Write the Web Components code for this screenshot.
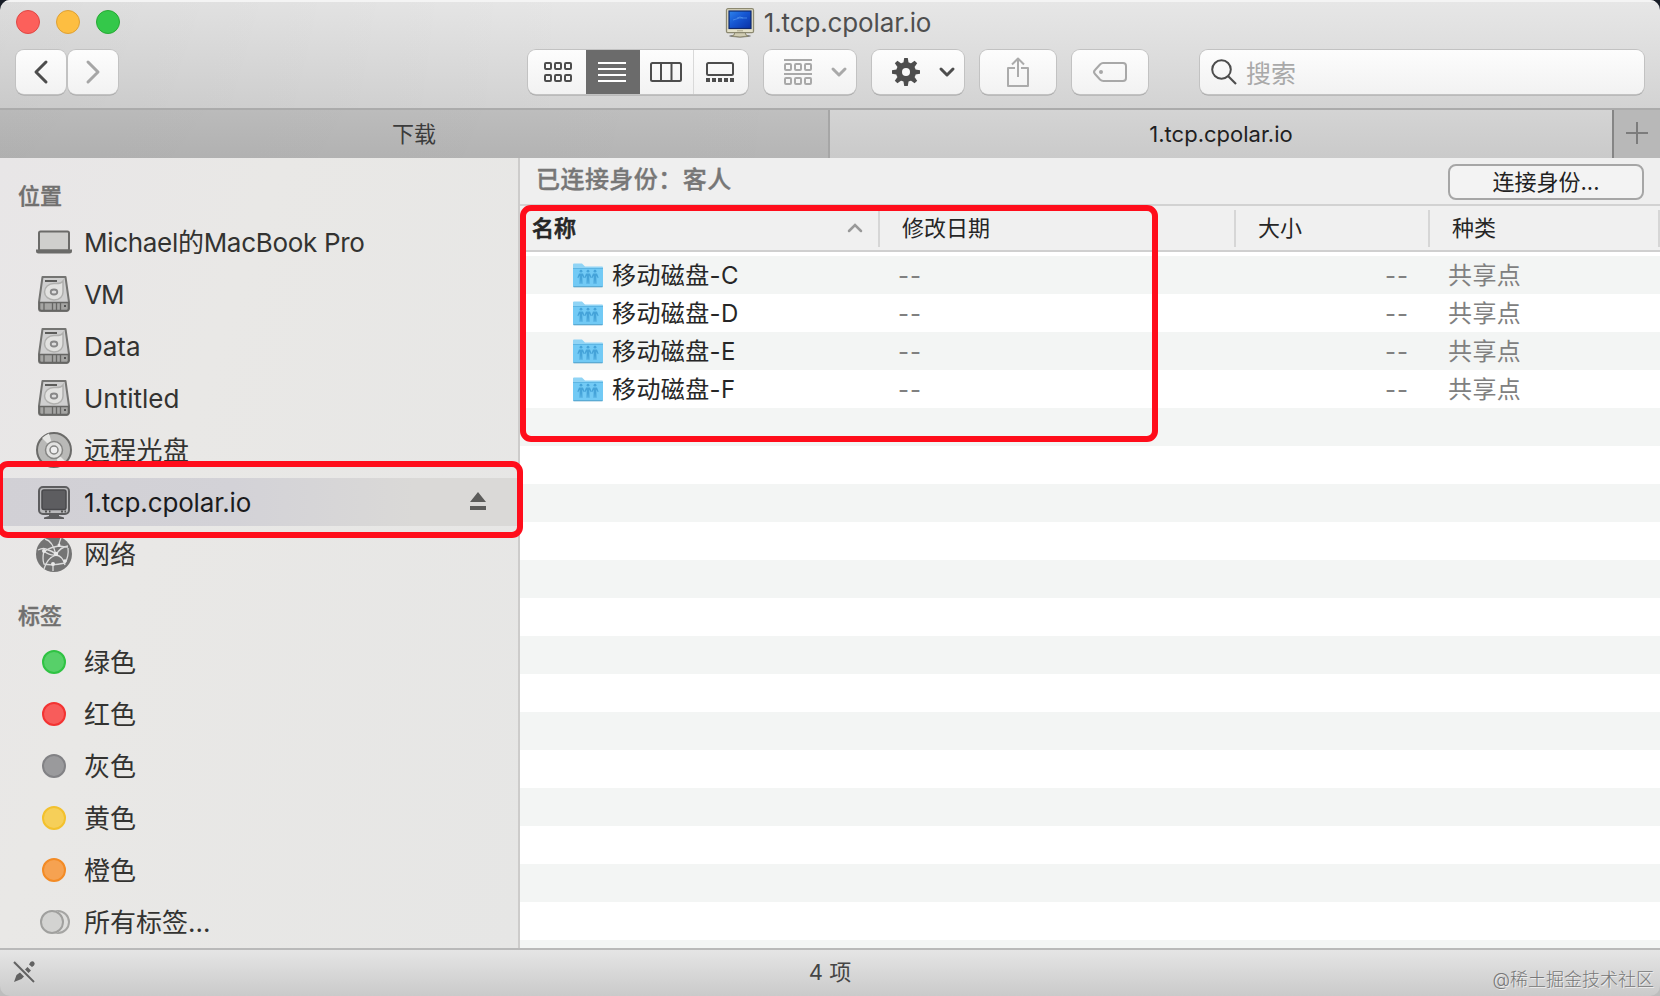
<!DOCTYPE html>
<html lang="zh-CN">
<head>
<meta charset="utf-8">
<title>1.tcp.cpolar.io</title>
<style>
    html, body {
        margin: 0;
        height: 100%;
        overflow: hidden;
        background: linear-gradient(#171c26 50%, #bdbdbd 50%);
        font-family: Inter, "Noto Sans CJK SC", sans-serif;
    }
</style>
</head>
<body>
<finder-window></finder-window>
<script>
const DISK = `
    <path d="M4.5 1h23l3.5 25v6.500a2.500 2.500 0 0 1-2.500 2.500h-25a2.500 2.500 0 0 1-2.500-2.500V26z" fill="#cfcfcf" stroke="#747472" stroke-width="2" stroke-linejoin="round"/>
    <path d="M1.500 26.500h29v6a2 2 0 0 1-2 2h-25a2 2 0 0 1-2-2z" fill="#a5a5a3" stroke="#666664" stroke-width="1.600"/>
    <path d="M7 5h12" stroke="#5c5c5a" stroke-width="2"/>
    <path d="M25 5c-2 3-5 2.500-9 2.500C10.500 7.500 6.500 11.500 6.500 16s4.500 8 9.500 8c6 0 9-4 9-8z" fill="#e2e2e0" stroke="#b0b0ae" stroke-width="1.500"/>
    <ellipse cx="16" cy="16" rx="3.300" ry="2.500" fill="#ddd" stroke="#888" stroke-width="1.800"/>
    <path d="M6 27v7M14.500 27v7M18.500 27v7M22.500 27v7" stroke="#666664" stroke-width="1.300"/>
    <path d="M26 30h2" stroke="#555" stroke-width="2"/>`;

const ICONS = {
    back: [14, 24, '<path d="M12 2L2 12l10 10" fill="none" stroke="#4d4d4d" stroke-width="3" stroke-linecap="round" stroke-linejoin="round"/>'],
    forward: [14, 24, '<path d="M2 2l10 10L2 22" fill="none" stroke="#a6a6a6" stroke-width="3" stroke-linecap="round" stroke-linejoin="round"/>'],
    grid: [28, 20, '<g fill="none" stroke="#4d4d4d" stroke-width="2"><rect x="1" y="1" width="6" height="6" rx="1"/><rect x="11" y="1" width="6" height="6" rx="1"/><rect x="21" y="1" width="6" height="6" rx="1"/><rect x="1" y="13" width="6" height="6" rx="1"/><rect x="11" y="13" width="6" height="6" rx="1"/><rect x="21" y="13" width="6" height="6" rx="1"/></g>'],
    list: [28, 20, '<path d="M0 1h28M0 7h28M0 13h28M0 19h28" stroke="#fff" stroke-width="2"/>'],
    columns: [32, 20, '<g fill="none" stroke="#4d4d4d" stroke-width="2"><rect x="1" y="1" width="30" height="18" rx="1.500"/><path d="M11 1v18M21.500 1v18"/></g>'],
    gallery: [28, 20, '<rect x="1" y="1" width="26" height="12" rx="1.500" fill="none" stroke="#4d4d4d" stroke-width="2"/><path d="M0 18h28" stroke="#4d4d4d" stroke-width="4" stroke-dasharray="4 2"/>'],
    group: [28, 26, '<g fill="none" stroke="#a9a9a9" stroke-width="2"><path d="M0 1h28M0 15h28"/><rect x="1" y="5" width="6" height="6" rx="1"/><rect x="11" y="5" width="6" height="6" rx="1"/><rect x="21" y="5" width="6" height="6" rx="1"/><rect x="1" y="19" width="6" height="6" rx="1"/><rect x="11" y="19" width="6" height="6" rx="1"/><rect x="21" y="19" width="6" height="6" rx="1"/></g>'],
    chevron: [16, 10, '<path d="M2 2l6 6 6-6" fill="none" stroke="currentColor" stroke-width="3" stroke-linecap="round" stroke-linejoin="round"/>'],
    gear: [28, 28, `<g fill="#4d4d4d">${[0, 45, 90, 135].map(a => `<path transform="rotate(${a} 14 14)" d="M12.200 0h3.600l1 6v16l-1 6h-3.600l-1-6V6z"/>`).join('')}<circle cx="14" cy="14" r="10"/></g><circle cx="14" cy="14" r="4" fill="#f8f8f8"/>`],
    share: [24, 30, '<path d="M9 11H2v18h20V11h-7M12 20V2M6 7.500L12 1.500l6 6" fill="none" stroke="#ababab" stroke-width="2" stroke-linejoin="round"/>'],
    tag: [34, 20, '<path d="M10 1h20a3 3 0 0 1 3 3v12a3 3 0 0 1-3 3H10.500q-2 0-3.500-1.500L2 12q-2-2 0-4l5-5.500Q8.500 1 10 1z" fill="none" stroke="#a8a8a8" stroke-width="2"/><circle cx="8" cy="10" r="2" fill="#a8a8a8"/>'],
    search: [26, 26, '<circle cx="10.500" cy="10.500" r="9.300" fill="none" stroke="#4d4d4d" stroke-width="2"/><path d="M17 17l8 8" stroke="#4d4d4d" stroke-width="2.200"/>'],
    plus: [22, 22, '<path d="M11 0v22M0 11h22" stroke="#7c7c7c" stroke-width="2"/>'],
    sort: [16, 10, '<path d="M2 8l6-6 6 6" fill="none" stroke="#999" stroke-width="2.500" stroke-linecap="round"/>'],
    eject: [16, 18, '<path d="M8 0l8 10H0zM0 14h16v4H0z" fill="#5c5c5a"/>'],
    laptop: [36, 24, '<rect x="3" y="1.500" width="30" height="19" rx="1.500" fill="#cfcfcd" stroke="#6b6b69" stroke-width="2"/><path d="M0 19.500h36v1.500a2.500 2.500 0 0 1-2.500 2.500h-31A2.500 2.500 0 0 1 0 21z" fill="#6b6b69"/>'],
    disk: [32, 36, DISK],
    disc: [36, 36, '<circle cx="18" cy="18" r="17" fill="#b9b9b7" stroke="#6b6b69" stroke-width="2"/><path d="M18 18L6 6q3-3 7-4.500zM18 18l12 12q-3 3-7 4.500z" fill="#e6e6e4"/><circle cx="18" cy="18" r="8.500" fill="#e2e2e0" stroke="#858583" stroke-width="1.500"/><circle cx="18" cy="18" r="4" fill="#eee" stroke="#858583" stroke-width="1.500"/>'],
    monitor: [32, 33, '<rect x="1" y="1" width="30" height="27" rx="4" fill="#b9b9bb" stroke="#5d5d5f" stroke-width="2"/><rect x="4" y="4" width="24" height="19.500" rx="2" fill="#5d5d60" stroke="#49494c" stroke-width="1.500"/><path d="M7 25.500h2M11 25.500h1.500M23 25.500h2M26.500 25.500H28" stroke="#555" stroke-width="2"/><path d="M11 28h10v2l5 1.500V33H6v-1.500l5-1.500z" fill="#5d5d5f"/>'],
    network: [36, 36, '<circle cx="18" cy="18" r="18" fill="#747474"/><g fill="none" stroke="#dcdcdc" stroke-width="1.300"><path d="M2 14q6-3 10 0 5 1 8 5 7 1 9 10M9 3q8 2 11 16M20 19Q11 22 8 33M20 19q4-8 12-9M25 2q-2 4-2 8-8 1-14 5M8 15q-2 8 0 13 9 2 21-1 4-7 3-15M20 19q-6 1-12-4M23 10q5 1 9 1M17 27v8"/></g><g fill="#e8e8e8"><circle cx="8" cy="15" r="2"/><circle cx="20" cy="18" r="2.200"/><circle cx="23" cy="9" r="1.500"/><circle cx="17" cy="28" r="2"/><circle cx="29" cy="25" r="1.800"/></g>'],
    alltags: [28, 24, '<circle cx="18" cy="12" r="11" fill="#dededc" stroke="#a5a5a3" stroke-width="2"/><circle cx="12" cy="12" r="12" fill="#e8e8e6"/><circle cx="12" cy="12" r="11" fill="#d3d3d1" stroke="#a0a09e" stroke-width="2"/>'],
    folder: [30, 25, `<path d="M0 1.500Q0 .5 1 .5h8l3 3h17q1 0 1 1V23q0 1-1 1H1q-1 0-1-1z" fill="#90d4f5"/><path d="M0 6h30v17q0 1-1 1H1q-1 0-1-1z" fill="#72caf5"/><path d="M0 5.500h30" stroke="#5db6e4"/><path d="M.5 23.800h29" stroke="#529fc7" stroke-width="1"/><g fill="#45a3d9">${[8, 15, 22].map(x => `<circle cx="${x}" cy="8.200" r="1.400"/><path d="M${x - 2} 10.500h4l1.600 4-.8.800-1.500-2.500.2 8h-1.100l-.4-4.500-.4 4.500h-1.100l.2-8-1.500 2.500-.8-.8z"/>`).join('')}</g>`],
    server: [30, 30, '<defs><linearGradient id="s" x1="0" y1="0" x2="1" y2="1"><stop offset="0" stop-color="#2e83ec"/><stop offset=".45" stop-color="#1657d3"/><stop offset="1" stop-color="#0930a5"/></linearGradient></defs><ellipse cx="15" cy="28" rx="11" ry="1.500" fill="#777"/><path d="M10 24h10l1 3 2 1q-8 2-16 0l2-1z" fill="#d0ccb3" stroke="#8e8a70"/><rect x="1.500" y=".7" width="27" height="24" rx="1.500" fill="#e4e1c9" stroke="#8c8971" stroke-width="1.300"/><rect x="4" y="3" width="22" height="17.500" fill="url(#s)" stroke="#10286a" stroke-width="1.200"/><path d="M8 12q6-3 14-2M12 10l3-1 3 1" fill="none" stroke="#4f8fe8" stroke-width=".8"/><path d="M12 22.800h6" stroke="#aaa68b"/>'],
    pencil: [22, 22, '<path d="M1 21l2.500-7 3.500-2.500 4 4L8.500 18zM11.500 9l3-3 3.500 3.500-3 3zM16 3.500l1.500-2.500q2-1.500 3.500 0t0 3.500L19 6z" fill="#626262"/><path d="M1 1l20 20" stroke="#d8d8d8" stroke-width="5"/><path d="M1 1l20 20" stroke="#626262" stroke-width="2"/>']
};

class BaseElement extends HTMLElement {
    constructor() {
        super();
        this.attachShadow({ mode: 'open' });
    }

    connectedCallback() {
        this.shadowRoot.innerHTML = this.template();
    }
}

class FinderIcon extends BaseElement {
    template() {
        const [width, height, body] = ICONS[this.getAttribute('name')];
        return `
            <style>
                :host { display: inline-flex; flex: none; }
                svg { display: block; overflow: visible; }
            </style>
            <svg width="${width}" height="${height}" viewBox="0 0 ${width} ${height}">${body}</svg>`;
    }
}

class ToolButton extends BaseElement {
    template() {
        return `
            <style>
                :host {
                    display: flex;
                    align-items: center;
                    justify-content: center;
                    box-sizing: border-box;
                    height: 44px;
                    border-radius: 8px;
                    background: linear-gradient(#fdfdfd, #f2f2f2);
                    box-shadow: 0 0 0 1px #c2c2c2, 0 1.5px 0 0 #a0a0a0;
                    color: #4d4d4d;
                }
            </style>
            <slot></slot>`;
    }
}

class FinderToolbar extends BaseElement {
    template() {
        return `
            <style>
                :host {
                    display: block;
                    box-sizing: border-box;
                    height: 110px;
                    border-bottom: 2px solid #ababab;
                    background: linear-gradient(90deg, rgba(0, 0, 0, .045), transparent 35%), linear-gradient(#e7e7e7, #d3d3d3);
                    box-shadow: inset 0 2px 0 #f4f4f4;
                }
                .title {
                    display: grid;
                    grid-template-columns: 1fr auto 1fr;
                    height: 50px;
                }
                .lights { display: flex; gap: 16px; padding: 10px 16px; }
                .lights i {
                    box-sizing: border-box;
                    width: 24px;
                    height: 24px;
                    border: 1px solid;
                    border-radius: 50%;
                }
                .name {
                    display: flex;
                    gap: 9px;
                    padding: 8px 4px 0 0;
                    font-size: 26px;
                    line-height: 30px;
                    letter-spacing: -.12px;
                    color: #4f4f4f;
                }
                .tools { display: flex; padding: 0 16px; }
                .nav { width: 50px; margin-right: 2px; }
                .views { width: 220px; margin-left: 408px; overflow: hidden; clip-path: inset(-1px -1px -3px round 8px); }
                .views span { display: flex; align-items: center; justify-content: center; height: 100%; box-sizing: border-box; }
                .wide { width: 92px; gap: 19px; margin-left: 16px; padding-left: 11px; box-sizing: border-box; }
                .plain { width: 76px; margin-left: 16px; }
                .search {
                    width: 444px;
                    margin-left: 52px;
                    justify-content: flex-start;
                    gap: 9px;
                    padding-left: 11px;
                    font-size: 25px;
                    color: #a9a9a9;
                }
            </style>
            <div class="title">
                <div class="lights">
                    <i style="background:#fc605b;border-color:#df4744"></i>
                    <i style="background:#fdbe41;border-color:#dea034"></i>
                    <i style="background:#34c84a;border-color:#27a934"></i>
                </div>
                <div class="name"><finder-icon name="server"></finder-icon><span>1.tcp.cpolar.io</span></div>
            </div>
            <div class="tools">
                <tool-button class="nav"><finder-icon name="back"></finder-icon></tool-button>
                <tool-button class="nav"><finder-icon name="forward"></finder-icon></tool-button>
                <tool-button class="views">
                    <span style="width:58px;padding-left:2px"><finder-icon name="grid"></finder-icon></span>
                    <span style="width:54px;padding-right:2px;background:#6b6b6b"><finder-icon name="list"></finder-icon></span>
                    <span style="width:54px;padding-right:1px;border-right:1px solid #d9d9d9"><finder-icon name="columns"></finder-icon></span>
                    <span style="width:54px;padding-right:2px"><finder-icon name="gallery"></finder-icon></span>
                </tool-button>
                <tool-button class="wide" style="color:#a9a9a9"><finder-icon name="group"></finder-icon><finder-icon name="chevron"></finder-icon></tool-button>
                <tool-button class="wide"><finder-icon name="gear"></finder-icon><finder-icon name="chevron"></finder-icon></tool-button>
                <tool-button class="plain"><finder-icon name="share"></finder-icon></tool-button>
                <tool-button class="plain"><finder-icon name="tag"></finder-icon></tool-button>
                <tool-button class="search"><finder-icon name="search"></finder-icon><span>搜索</span></tool-button>
            </div>`;
    }
}

class FinderTabs extends BaseElement {
    template() {
        return `
            <style>
                :host {
                    display: grid;
                    grid-template-columns: 828px 784px 48px;
                    box-sizing: border-box;
                    height: 48px;
                    border-bottom: 2px solid #989898;
                    font-size: 22px;
                    line-height: 48px;
                    text-align: center;
                    color: #1f1f1f;
                }
                .idle { background: linear-gradient(90deg, rgba(0, 0, 0, .03), transparent), linear-gradient(#bfbfbf, #b5b5b5); color: #3c3c3c; }
                .active { background: linear-gradient(#d4d4d4, #cacaca); border-left: 2px solid #a6a6a6; }
                .add { display: flex; align-items: center; justify-content: center; padding-bottom: 2px; border-left: 2px solid #858585; background: #b8b8b8; }
            </style>
            <div class="idle">下载</div>
            <div class="active">1.tcp.cpolar.io</div>
            <div class="add"><finder-icon name="plus"></finder-icon></div>`;
    }
}

class SidebarItem extends BaseElement {
    template() {
        const icon = this.getAttribute('icon');
        const [fill, ring] = (this.getAttribute('dot') || '').split(' ');
        return `
            <style>
                :host {
                    display: flex;
                    align-items: center;
                    box-sizing: border-box;
                    height: 52px;
                    padding: 0 32px 0 34px;
                    font-size: 26px;
                    line-height: 46px;
                    color: #333331;
                    white-space: nowrap;
                }
                :host([selected]) {
                    height: 48px;
                    margin: 2px 0;
                    background: linear-gradient(90deg, #d1d0d5, #d3d2d7 45%, #dad9d7 80%);
                    color: #1b1b1d;
                }
                .icon { display: flex; justify-content: center; width: 40px; margin-right: 10px; }
                .dot { box-sizing: border-box; width: 24px; height: 24px; border: 2px solid ${ring}; border-radius: 50%; background: ${fill}; }
                .label { flex: 1; padding-top: 2px; }
                .eject { padding-bottom: 2px; }
            </style>
            <span class="icon">${icon ? `<finder-icon name="${icon}"></finder-icon>` : '<i class="dot"></i>'}</span>
            <span class="label"><slot></slot></span>
            ${this.hasAttribute('selected') ? '<finder-icon class="eject" name="eject"></finder-icon>' : ''}`;
    }
}

class FinderSidebar extends BaseElement {
    template() {
        return `
            <style>
                :host {
                    display: block;
                    box-sizing: border-box;
                    width: 520px;
                    border-right: 2px solid #cdcccb;
                    background: linear-gradient(110deg, #e8e6e7, #e9e8e6 35%, #e6e6e5);
                }
                h2 {
                    margin: 0;
                    padding-left: 18px;
                    font-size: 22px;
                    font-weight: 500;
                    -webkit-text-stroke: .4px #71706f;
                    color: #71706f;
                }
                .places { height: 58px; line-height: 76px; }
                .tags { height: 56px; line-height: 72px; }
            </style>
            <h2 class="places">位置</h2>
            <sidebar-item icon="laptop" style="letter-spacing:-.3px">Michael的MacBook Pro</sidebar-item>
            <sidebar-item icon="disk" style="letter-spacing:-.9px">VM</sidebar-item>
            <sidebar-item icon="disk">Data</sidebar-item>
            <sidebar-item icon="disk">Untitled</sidebar-item>
            <sidebar-item icon="disc" style="letter-spacing:.3px">远程光盘</sidebar-item>
            <sidebar-item icon="monitor" selected style="letter-spacing:-.15px">1.tcp.cpolar.io</sidebar-item>
            <sidebar-item icon="network">网络</sidebar-item>
            <h2 class="tags">标签</h2>
            <sidebar-item dot="#57d069 #2fc343">绿色</sidebar-item>
            <sidebar-item dot="#f85c5b #f33332">红色</sidebar-item>
            <sidebar-item dot="#9a9a9c #828285">灰色</sidebar-item>
            <sidebar-item dot="#f6cf59 #f3c12d">黄色</sidebar-item>
            <sidebar-item dot="#f6a251 #f38b25">橙色</sidebar-item>
            <sidebar-item icon="alltags">所有标签...</sidebar-item>`;
    }
}

class FileRow extends BaseElement {
    template() {
        return `
            <style>
                :host {
                    display: grid;
                    grid-template-columns: 378px 356px 174px 1fr;
                    height: 38px;
                    font-size: 24px;
                    line-height: 40px;
                    color: #808080;
                }
                .name { display: flex; align-items: center; gap: 9px; padding-left: 53px; letter-spacing: .4px; color: #262626; }
                finder-icon { padding-bottom: 1px; }
                .kind { padding-left: 20px; letter-spacing: .4px; }
                .size { padding-right: 19px; text-align: right; }
                .size, .date { letter-spacing: 1px; }
            </style>
            <span class="name"><finder-icon name="folder"></finder-icon><span><slot></slot></span></span>
            <span class="date">--</span>
            <span class="size">--</span>
            <span class="kind">共享点</span>`;
    }
}

class FileList extends BaseElement {
    template() {
        const rows = ['C', 'D', 'E', 'F'].map(letter => `<file-row>移动磁盘-${letter}</file-row>`).join('');
        return `
            <style>
                :host { display: flex; flex-direction: column; flex: 1; min-width: 0; background: #fff; }
                .identity {
                    display: flex;
                    justify-content: space-between;
                    box-sizing: border-box;
                    height: 48px;
                    padding: 6px 16px 0 16px;
                    border-bottom: 2px solid #d2d2d2;
                    background: #efefef;
                    font-size: 24px;
                    font-weight: 500;
                    line-height: 32px;
                    letter-spacing: .45px;
                    color: #777;
                }
                .identity span { -webkit-text-stroke: .35px #777; }
                button {
                    box-sizing: border-box;
                    width: 196px;
                    height: 36px;
                    padding: 0;
                    border: 2px solid #a6a6a6;
                    border-radius: 8px;
                    background: #f3f3f3;
                    font: 22px/32px Inter, "Noto Sans CJK SC", sans-serif;
                    color: #222;
                }
                .head {
                    display: grid;
                    grid-template-columns: 360px 356px 194px 1fr;
                    align-items: center;
                    box-sizing: border-box;
                    height: 46px;
                    border-bottom: 2px solid #cfcfcf;
                    background: #f0f0f0;
                    font-size: 22px;
                    line-height: 36px;
                    color: #262626;
                }
                .head span {
                    display: flex;
                    align-items: center;
                    justify-content: space-between;
                    box-sizing: border-box;
                    height: 37px;
                    padding: 0 15px 1px 22px;
                    border-right: 2px solid #d6d6d6;
                }
                .head span:first-child { padding-left: 12px; font-weight: 500; -webkit-text-stroke: .7px #262626; }
                .rows {
                    flex: 1;
                    margin-top: 4px;
                    background: repeating-linear-gradient(#f3f5f4 0 38px, #fff 38px 76px);
                }
            </style>
            <div class="identity"><span>已连接身份：客人</span><button>连接身份...</button></div>
            <div class="head">
                <span>名称<finder-icon name="sort"></finder-icon></span><span>修改日期</span><span>大小</span><span>种类</span>
            </div>
            <div class="rows">${rows}</div>`;
    }
}

class StatusBar extends BaseElement {
    template() {
        return `
            <style>
                :host {
                    display: grid;
                    grid-template-columns: 1fr auto 1fr;
                    box-sizing: border-box;
                    height: 48px;
                    padding: 0 6px;
                    border-top: 2px solid #b9b9b9;
                    background: linear-gradient(#e5e5e5, #cacaca);
                    font-size: 22px;
                    line-height: 45px;
                    color: #454545;
                }
                finder-icon { padding: 11px 0 0 7px; }
                .mark {
                    padding-top: 10px;
                    font-size: 18px;
                    line-height: 40px;
                    font-weight: 300;
                    text-align: right;
                    color: #777;
                    text-shadow: 1px 1px 0 #eee;
                }
            </style>
            <finder-icon name="pencil"></finder-icon>
            <span>4 项</span>
            <span class="mark">@稀土掘金技术社区</span>`;
    }
}

// Red outline laid over the part of the window it points at
class HighlightBox extends BaseElement {
    template() {
        return `
            <style>
                :host {
                    position: absolute;
                    box-sizing: border-box;
                    border: 6px solid #ff0d1b;
                    border-radius: 11px;
                    pointer-events: none;
                }
            </style>`;
    }
}

class FinderWindow extends BaseElement {
    template() {
        return `
            <style>
                :host {
                    position: relative;
                    display: flex;
                    flex-direction: column;
                    width: 1660px;
                    height: 996px;
                    overflow: hidden;
                    border-radius: 10px;
                }
                main { display: flex; flex: 1; min-height: 0; }
                .files { left: 520px; top: 205px; width: 638px; height: 237px; }
                .server { left: -3px; top: 461px; width: 526px; height: 77px; }
            </style>
            <finder-toolbar></finder-toolbar>
            <finder-tabs></finder-tabs>
            <main>
                <finder-sidebar></finder-sidebar>
                <file-list></file-list>
            </main>
            <status-bar></status-bar>
            <highlight-box class="files"></highlight-box>
            <highlight-box class="server"></highlight-box>`;
    }
}

customElements.define('finder-icon', FinderIcon);
customElements.define('tool-button', ToolButton);
customElements.define('finder-toolbar', FinderToolbar);
customElements.define('finder-tabs', FinderTabs);
customElements.define('sidebar-item', SidebarItem);
customElements.define('finder-sidebar', FinderSidebar);
customElements.define('file-row', FileRow);
customElements.define('file-list', FileList);
customElements.define('status-bar', StatusBar);
customElements.define('highlight-box', HighlightBox);
customElements.define('finder-window', FinderWindow);
</script>
</body>
</html>
